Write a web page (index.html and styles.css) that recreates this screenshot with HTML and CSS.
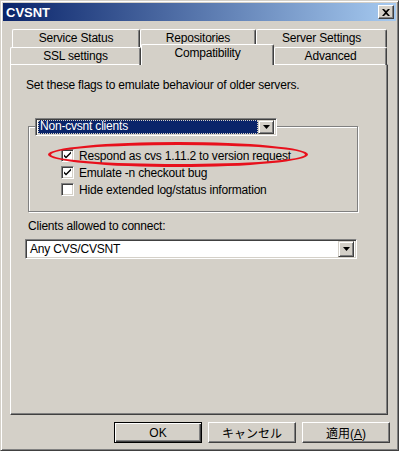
FILE: index.html
```html
<!DOCTYPE html>
<html lang="ja">
<head>
  <meta charset="UTF-8">
  <title>CVSNT</title>
  <link rel="stylesheet" href="styles.css">
</head>
<body>

  <div class="window">
    <div class="titlebar">
      <span class="title">CVSNT</span>
      <span class="close">
        <svg width="8" height="7" viewBox="0 0 8 7"><path d="M0 0h2l2 2 2-2h2L5 3.5 8 7H6L4 5 2 7H0l3-3.5z" fill="#000"/></svg>
      </span>
    </div>

    <div class="tabs">
      <div class="tabrow back">
        <div class="tab w1">Service Status</div>
        <div class="tab w2">Repositories</div>
        <div class="tab w3">Server Settings</div>
      </div>
      <div class="tabrow front">
        <div class="tab w4">SSL settings</div>
        <div class="tab w5 active">Compatibility</div>
        <div class="tab w6">Advanced</div>
      </div>
    </div>

    <div class="panel">
      <p class="intro">Set these flags to emulate behaviour of older servers.</p>

      <div class="group">
        <div class="combo small">
          <span class="combo-text selected">Non-cvsnt clients</span>
          <span class="arrow"><svg width="7" height="4" viewBox="0 0 7 4"><path d="M0 0h7L3.5 4z" fill="#000"/></svg></span>
        </div>

        <label class="check">
          <span class="box"><svg width="9" height="9" viewBox="0 0 9 9"><path d="M1 3.5l2 2 5-5v2l-5 5-2-2z" fill="#000"/></svg></span>
          Respond as cvs 1.11.2 to version request
        </label>
        <label class="check">
          <span class="box"><svg width="9" height="9" viewBox="0 0 9 9"><path d="M1 3.5l2 2 5-5v2l-5 5-2-2z" fill="#000"/></svg></span>
          Emulate -n checkout bug
        </label>
        <label class="check">
          <span class="box"></span>
          Hide extended log/status information
        </label>

        <div class="circle"></div>
      </div>

      <p class="label">Clients allowed to connect:</p>
      <div class="combo wide">
        <span class="combo-text">Any CVS/CVSNT</span>
        <span class="arrow"><svg width="7" height="4" viewBox="0 0 7 4"><path d="M0 0h7L3.5 4z" fill="#000"/></svg></span>
      </div>
    </div>

    <div class="buttons">
      <button class="default">OK</button>
      <button>キャンセル</button>
      <button>適用(<u>A</u>)</button>
    </div>
  </div>

</body>
</html>
```

FILE: styles.css
```css
body {
  margin: 0;
  font-family: "Liberation Sans", "Noto Sans CJK JP", sans-serif;
  font-size: 12px;
  letter-spacing: -0.2px;
  color: #000;
  background: #d4d0c8;
}

.window {
  width: 399px;
  height: 451px;
  box-sizing: border-box;
  padding: 2px;
  background: #d4d0c8;
  border-top: 1px solid #d4d0c8;
  border-left: 1px solid #d4d0c8;
  border-right: 1px solid #404040;
  border-bottom: 1px solid #404040;
  box-shadow: inset 1px 1px 0 #fff, inset -1px -1px 0 #808080;
}

.titlebar {
  height: 18px;
  display: flex;
  align-items: center;
  justify-content: space-between;
  padding: 0 2px 0 3px;
  background: linear-gradient(to right, #0a246a, #a6caf0);
}

.title {
  color: #fff;
  font-weight: bold;
  font-size: 13px;
  letter-spacing: 0;
}

.close {
  width: 16px;
  height: 14px;
  box-sizing: border-box;
  display: flex;
  align-items: center;
  justify-content: center;
  background: #d4d0c8;
  border-top: 1px solid #fff;
  border-left: 1px solid #fff;
  border-right: 1px solid #404040;
  border-bottom: 1px solid #404040;
  box-shadow: inset -1px -1px 0 #808080;
}

.tabs {
  margin: 8px 0 0 7px;
}

.tabrow {
  display: flex;
}

.tabrow.back {
  margin-left: 2px;
}

.tab {
  height: 18px;
  box-sizing: border-box;
  text-align: center;
  line-height: 17px;
  border-top: 1px solid #fff;
  border-left: 1px solid #fff;
  border-right: 1px solid #404040;
  box-shadow: inset -1px 0 0 #808080;
  border-radius: 2px 2px 0 0;
}

.w1 { width: 128px; }
.w2 { width: 116px; }
.w3 { width: 131px; }
.w4 { width: 131px; }
.w5 { width: 133px; }
.w6 { width: 113px; }

.tabrow.front .tab {
  margin-bottom: -1px;
}

.tab.active {
  position: relative;
  z-index: 1;
  height: 21px;
  margin-top: -3px;
  margin-bottom: -1px;
  line-height: 16px;
  background: #d4d0c8;
}

.panel {
  width: 378px;
  height: 351px;
  box-sizing: border-box;
  margin-left: 7px;
  padding: 13px 0 0 14px;
  border-top: 1px solid #fff;
  border-left: 1px solid #fff;
  border-right: 1px solid #404040;
  border-bottom: 1px solid #404040;
  box-shadow: inset -1px -1px 0 #808080;
}

.intro {
  margin: 0 0 34px 1px;
}

.group {
  position: relative;
  width: 330px;
  height: 86px;
  box-sizing: border-box;
  margin: 0 0 0 3px;
  padding: 20px 0 0 32px;
  border: 1px solid #808080;
  box-shadow: 1px 1px 0 #fff, inset 1px 1px 0 #fff;
}

.combo {
  display: flex;
  align-items: center;
  box-sizing: border-box;
  height: 18px;
  padding: 2px;
  background: #fff;
  border-top: 1px solid #808080;
  border-left: 1px solid #808080;
  border-right: 1px solid #fff;
  border-bottom: 1px solid #fff;
  box-shadow: inset 1px 1px 0 #404040, inset -1px -1px 0 #d4d0c8;
}

.combo.small {
  position: absolute;
  top: -9px;
  left: 6px;
  width: 242px;
}

.combo.wide {
  width: 332px;
  height: 20px;
  margin-left: 0;
}

.combo-text {
  flex: 1;
  height: 14px;
  line-height: 13px;
  padding-left: 2px;
  box-sizing: border-box;
}

.combo.wide .combo-text {
  line-height: 14px;
}

.combo.wide .arrow {
  height: 16px;
}

.combo-text.selected {
  background: #0a246a;
  color: #fff;
  outline: 1px dotted #d4d0c8;
  outline-offset: -1px;
}

.arrow {
  width: 16px;
  height: 14px;
  box-sizing: border-box;
  display: flex;
  align-items: center;
  justify-content: center;
  background: #d4d0c8;
  border-top: 1px solid #d4d0c8;
  border-left: 1px solid #d4d0c8;
  border-right: 1px solid #404040;
  border-bottom: 1px solid #404040;
  box-shadow: inset 1px 1px 0 #fff, inset -1px -1px 0 #808080;
}

.check {
  display: flex;
  align-items: center;
  gap: 5px;
  height: 17px;
}

.box {
  width: 13px;
  height: 13px;
  box-sizing: border-box;
  display: flex;
  align-items: center;
  justify-content: center;
  background: #fff;
  border-top: 1px solid #808080;
  border-left: 1px solid #808080;
  border-right: 1px solid #fff;
  border-bottom: 1px solid #fff;
  box-shadow: inset 1px 1px 0 #404040, inset -1px -1px 0 #d4d0c8;
}

.circle {
  position: absolute;
  left: 19px;
  top: 15px;
  width: 254px;
  height: 19px;
  border: 3.5px solid #e8101c;
  border-radius: 50%;
}

.label {
  margin: 7px 0 6px 3px;
}

.buttons {
  display: flex;
  justify-content: flex-end;
  gap: 6px;
  margin: 7px 6px 0 0;
}

button {
  width: 88px;
  height: 21px;
  padding: 0;
  font-family: "Liberation Sans", "Noto Sans CJK JP", sans-serif;
  font-size: 12px;
  color: #000;
  background: #d4d0c8;
  border-top: 1px solid #fff;
  border-left: 1px solid #fff;
  border-right: 1px solid #404040;
  border-bottom: 1px solid #404040;
  box-shadow: inset -1px -1px 0 #808080;
}

button.default {
  border: 1px solid #000;
  box-shadow: inset 1px 1px 0 #fff, inset -1px -1px 0 #404040, inset -2px -2px 0 #808080;
}

button u {
  text-decoration: underline;
}
```
